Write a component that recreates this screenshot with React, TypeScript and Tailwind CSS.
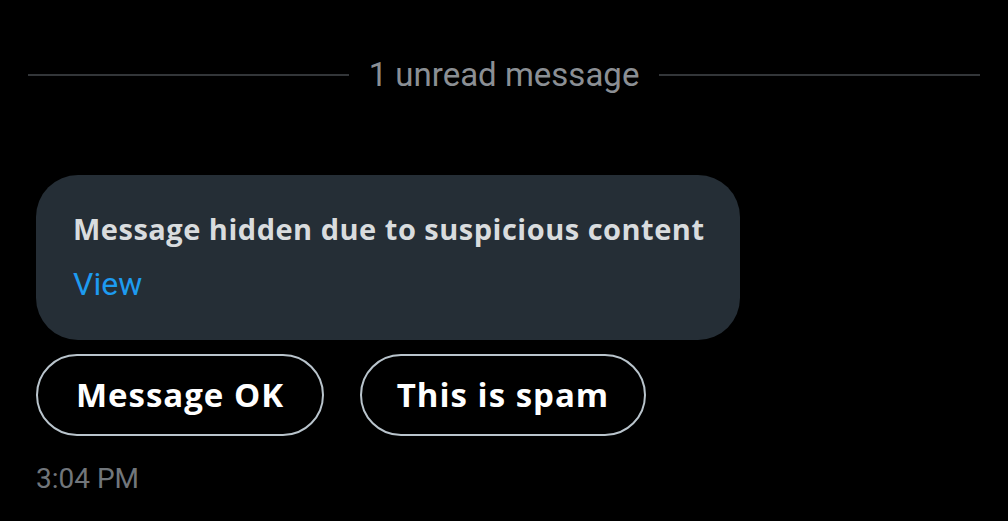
export default function App() {
  return (
    <div className="w-[1008px] h-[521px] bg-black overflow-hidden" style={{ fontFamily: "Roboto, sans-serif" }}>
      {/* Unread divider */}
      <div className="flex items-center px-[28px] pt-[54px]">
        <div className="flex-1 h-[2px] bg-[#333639]" />
        <span className="px-[20px] text-[33px] leading-[42px] text-[#8b8f94]">1 unread message</span>
        <div className="flex-1 h-[2px] bg-[#333639]" />
      </div>

      <div className="pl-[36px] pt-[79px]">
        {/* Hidden message bubble */}
        <div
          className="w-[704px] h-[165px] rounded-[42px] bg-[#252e36] pl-[37px] pt-[34px]"
          style={{ fontFamily: "'Open Sans', sans-serif" }}
        >
          <p className="whitespace-nowrap text-[29px] leading-[40px] font-bold tracking-[0.5px] text-[#d9dcde]">
            Message hidden due to suspicious content
          </p>
          <p className="mt-[17px] text-[32px] leading-[36px] text-[#1d9bf0]" style={{ fontFamily: "Roboto, sans-serif" }}>
            View
          </p>
        </div>

        {/* Actions */}
        <div className="flex gap-[36px] mt-[14px]" style={{ fontFamily: "'Open Sans', sans-serif" }}>
          <button className="w-[288px] h-[82px] rounded-full border-2 border-[#b9c4cc] text-[33px] font-bold tracking-[1px] text-white">
            Message OK
          </button>
          <button className="w-[286px] h-[82px] rounded-full border-2 border-[#b9c4cc] text-[33px] font-bold tracking-[1px] text-white">
            This is spam
          </button>
        </div>

        <p className="mt-[27px] text-[28px] leading-[32px] text-[#71767b]">3:04 PM</p>
      </div>
    </div>
  );
}
